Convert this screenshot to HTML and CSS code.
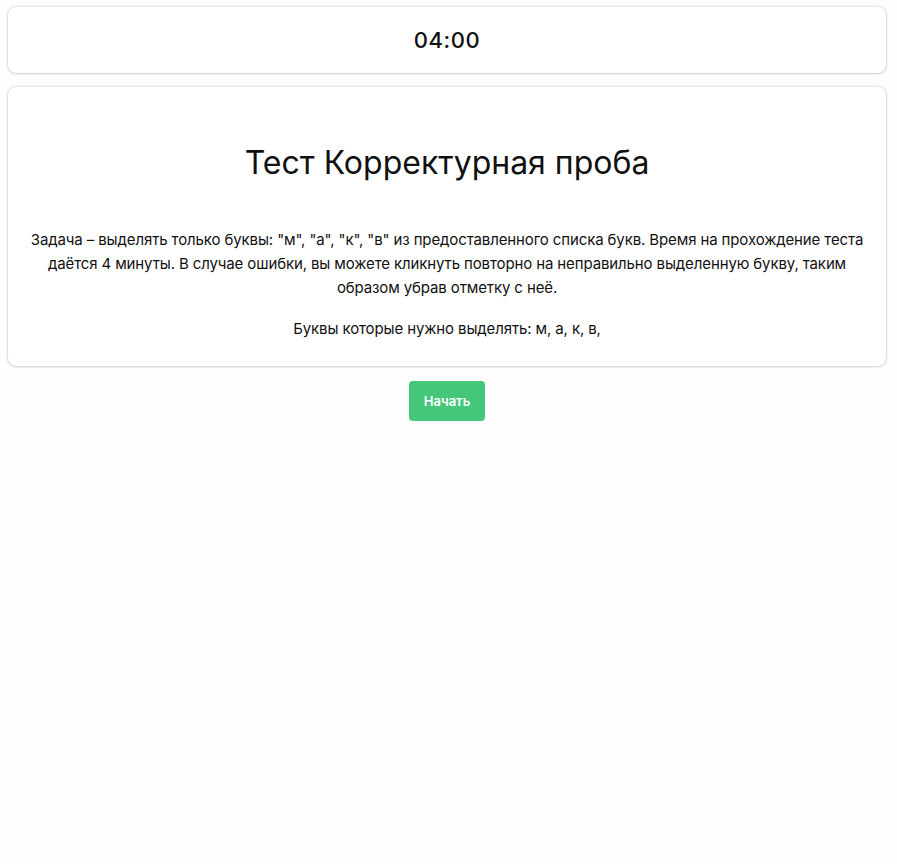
FILE: index.html
```html
<!DOCTYPE html>
<html lang="ru">
<head>
<meta charset="utf-8">
<title>Тест Корректурная проба</title>
<link rel="stylesheet" href="styles.css">
</head>
<body>
<div class="page">
  <div class="card timer-card">
    <div class="timer">04:00</div>
  </div>
  <div class="card intro-card">
    <h1 class="title">Тест Корректурная проба</h1>
    <p class="desc">Задача – выделять только буквы: "м", "а", "к", "в" из предоставленного списка букв. Время на прохождение теста даётся 4 минуты. В случае ошибки, вы можете кликнуть повторно на неправильно выделенную букву, таким образом убрав отметку с неё.</p>
    <p class="letters">Буквы которые нужно выделять: м, а, к, в,</p>
  </div>
  <div class="actions">
    <button class="start-btn">Начать</button>
  </div>
</div>
</body>
</html>
```

FILE: styles.css
```css
html, body {
  margin: 0;
  padding: 0;
  background: #fefefe;
}
body {
  font-family: Inter, "Noto Sans", sans-serif;
  color: #111;
}
.page {
  padding: 7px 11px 0 8px;
  display: flex;
  flex-direction: column;
  gap: 14px;
}
.card {
  background: #fff;
  border-radius: 8px;
  box-shadow: 0 0 3px rgba(0,0,0,0.25), 0 1px 2px rgba(0,0,0,0.08);
}
.timer-card {
  height: 66px;
  display: flex;
  align-items: center;
  justify-content: center;
}
.timer {
  font-size: 22px;
  font-weight: 500;
  letter-spacing: 0.6px;
}
.intro-card {
  padding: 56px 20px 25px;
  text-align: center;
}
.title {
  margin: 0 0 45px;
  font-size: 32px;
  font-weight: 400;
  line-height: 40px;
}
.desc {
  margin: 0 0 17px;
  font-size: 15px;
  line-height: 24px;
  letter-spacing: -0.12px;
}
.letters {
  margin: 0;
  font-size: 15px;
  line-height: 24px;
  letter-spacing: -0.12px;
}
.actions {
  display: flex;
  justify-content: center;
  margin-top: 1px;
}
.start-btn {
  width: 76px;
  height: 40px;
  border: none;
  border-radius: 4px;
  background: #44c77a;
  color: #fff;
  font-family: Inter, "Noto Sans", sans-serif;
  font-size: 13px;
  font-weight: 600;
  cursor: pointer;
}
```
